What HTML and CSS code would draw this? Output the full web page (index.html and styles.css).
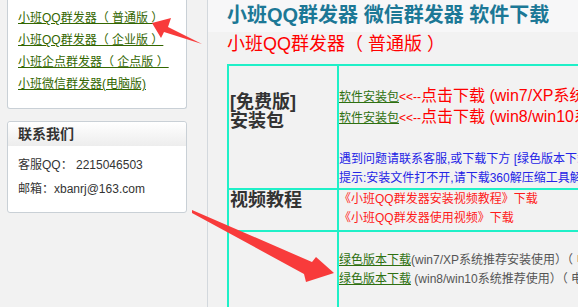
FILE: index.html
```html
<!DOCTYPE html>
<html lang="zh-CN">
<head>
    <meta charset="UTF-8">
    <title>小班QQ群发器 软件下载</title>
    <link rel="stylesheet" href="styles.css">
</head>
<body>
    <div class="sidebar">
        <div class="box box-links">
            <a href="#">小班QQ群发器（ 普通版 ）</a>
            <a href="#">小班QQ群发器（ 企业版 ）</a>
            <a href="#">小班企点群发器（ 企点版 ）</a>
            <a href="#">小班微信群发器(电脑版)</a>
        </div>
        <div class="box box-contact">
            <div class="box-head">联系我们</div>
            <div class="box-body">
                <p>客服QQ： 2215046503</p>
                <p>邮箱：xbanrj@163.com</p>
            </div>
        </div>
    </div>

    <div class="main">
        <div class="title-band">小班QQ群发器 微信群发器 软件下载</div>
        <div class="subtitle">小班QQ群发器（ 普通版 ）</div>

        <table class="dl-table">
            <tr class="r1">
                <td class="name">[免费版]<br>安装包</td>
                <td class="info">
                    <div><a href="#">软件安装包</a><span class="red">&lt;&lt;--<span class="big">点击下载 (win7/XP系统推荐安装使用)</span></span></div>
                    <div><a href="#">软件安装包</a><span class="red">&lt;&lt;--<span class="big">点击下载 (win8/win10系统推荐使用)</span></span></div>
                    <div class="spacer"></div>
                    <div class="blue">遇到问题请联系客服,或下载下方 [绿色版本下载] 使用</div>
                    <div class="blue">提示:安装文件打不开,请下载360解压缩工具解压后安装</div>
                </td>
            </tr>
            <tr class="r2">
                <td class="name">视频教程</td>
                <td class="info video">
                    <div>《小班QQ群发器安装视频教程》下载</div>
                    <div>《小班QQ群发器使用视频》下载</div>
                </td>
            </tr>
            <tr class="r3">
                <td class="name">[绿色版]</td>
                <td class="info grey">
                    <div><a href="#">绿色版本下载</a>(win7/XP系统推荐安装使用）（ 电脑需安装.NET4.0 ）</div>
                    <div><a href="#">绿色版本下载</a> (win8/win10系统推荐使用）（ 电脑需安装.NET4.0 ）</div>
                </td>
            </tr>
        </table>
    </div>

    <svg class="marks" width="578" height="307" viewBox="0 0 578 307">
        <polygon points="152,23 171,18 168,27 202,44 164,32 161,38" fill="#f83b3b"/>
        <polygon points="192,210 312,262 316,257 334,273 306,282 304,274 192,213" fill="#f83b3b"/>
    </svg>
</body>
</html>
```

FILE: styles.css
```css
html, body {
    height: 100%;
    overflow: hidden;
}
body {
    margin: 0;
    display: flex;
    background: #f2f2f2;
    font-family: "Liberation Sans", "Noto Sans CJK SC", sans-serif;
    font-size: 12px;
    color: #333;
}
.sidebar {
    width: 180px;
    flex-shrink: 0;
    padding: 0 20px 0 7px;
}
.box {
    background: #fff;
    border: 1px solid #c9d0d6;
    border-radius: 3px;
    box-sizing: border-box;
}
.box-links {
    border-top: 0;
    border-radius: 0 0 3px 3px;
    padding: 7px 0 13px 10px;
}
.box-links a {
    display: block;
    line-height: 22px;
    color: #336600;
}
.box-contact {
    margin-top: 12px;
}
.box-head {
    height: 24px;
    line-height: 25px;
    padding-left: 10px;
    font-size: 14px;
    font-weight: bold;
    background: linear-gradient(#ffffff, #ededed);
    border-radius: 3px 3px 0 0;
}
.box-body {
    padding: 7px 10px 11px;
}
.box-body p {
    margin: 0;
    line-height: 24px;
}

.main {
    flex: 1;
    min-width: 0;
    overflow: hidden;
    border-left: 1px solid #d3d8dd;
}
.title-band {
    height: 32px;
    line-height: 30px;
    padding-left: 19px;
    background: #f7f7f8;
    color: #1c7896;
    font-size: 20px;
    font-weight: bold;
    white-space: nowrap;
}
.subtitle {
    line-height: 24px;
    padding-left: 19px;
    color: #ff0000;
    font-size: 18px;
    white-space: nowrap;
}
.dl-table {
    table-layout: fixed;
    width: 540px;
    margin: 8px 0 0 19px;
    border-spacing: 0;
    border-top: 2px solid #1ff0c8;
    border-left: 2px solid #1ff0c8;
}
.dl-table td {
    border-right: 2px solid #1ff0c8;
    border-bottom: 2px solid #1ff0c8;
    box-sizing: border-box;
    vertical-align: top;
    padding: 0;
    white-space: nowrap;
    overflow: hidden;
}
.dl-table .name {
    width: 110px;
    padding-left: 1px;
    font-size: 18px;
    font-weight: bold;
    line-height: 19px;
    color: #333;
}
.dl-table .info {
    line-height: 19px;
}
.r1 td { height: 122px; }
.r1 .name { padding-top: 27px; }
.r1 .info { padding-top: 20px; }
.r2 td { height: 42px; }
.r2 .name { line-height: 20px; }
.r3 td { height: 170px; }
.r3 .name { padding-top: 76px; }
.r3 .info { padding-top: 19px; }

.info a {
    color: #2e7010;
}
.red {
    color: #ff0000;
}
.red .big {
    font-size: 16px;
}
.spacer {
    height: 22px;
}
.blue {
    color: #2424e6;
}
.video {
    padding-left: 6px;
    color: #ff1a1a;
}
.grey {
    color: #555;
}

.marks {
    position: absolute;
    left: 0;
    top: 0;
    pointer-events: none;
}
```
